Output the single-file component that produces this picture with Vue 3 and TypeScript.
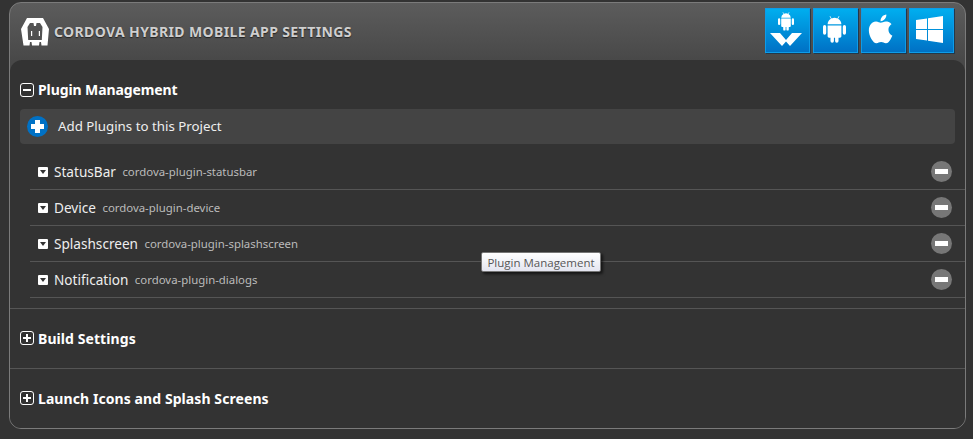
<script setup lang="ts">
interface Plugin { name: string; id: string }
const plugins: Plugin[] = [
  { name: 'StatusBar', id: 'cordova-plugin-statusbar' },
  { name: 'Device', id: 'cordova-plugin-device' },
  { name: 'Splashscreen', id: 'cordova-plugin-splashscreen' },
  { name: 'Notification', id: 'cordova-plugin-dialogs' },
]
const androidPath = 'M8.2 1.2l1.3 2.1A7 7 0 0 1 14.5 3.3l1.3-2.1.5.3-1.2 2.1A6 6 0 0 1 18 8.4H6a6 6 0 0 1 2.9-4.8L7.7 1.500zM6 9.400h12v9.400a1.300 1.300 0 0 1-1.300 1.300h-1.200v2.900a1.500 1.500 0 0 1-3 0v-2.900h-1v2.900a1.500 1.500 0 0 1-3 0v-2.900H7.300A1.300 1.300 0 0 1 6 18.800zM3.400 9.100A1.400 1.400 0 0 1 4.800 10.500v5.600a1.400 1.400 0 0 1-2.800 0v-5.600A1.400 1.400 0 0 1 3.400 9.100zM20.600 9.100a1.400 1.400 0 0 1 1.400 1.400v5.600a1.400 1.400 0 0 1-2.800 0v-5.600a1.400 1.400 0 0 1 1.400-1.400z'
</script>

<template>
  <div class="page">
    <div class="panel">
      <header class="head">
        <svg class="logo" viewBox="0 0 28 28" aria-hidden="true">
          <path fill="#fff" fill-rule="evenodd" d="M6 0h16l6 11-1.500 16.500h-6l-.5-3.500h-1.500l-.5 3.500h-7l-.5-3.500h-1.500l-.5 3.500h-6L0 11zM9 5l-2.500 4 .7 13h13.600l.7-13L19 5h-3.500l-.5 3h-2l-.5-3z" />
          <rect x="10" y="13" width="1.200" height="5" fill="#fff" />
          <rect x="17.800" y="13" width="1.200" height="5" fill="#fff" />
        </svg>
        <h1 class="title">Cordova Hybrid Mobile App Settings</h1>
        <div class="platforms">
          <button class="platform">
            <svg viewBox="0 0 43 43" aria-hidden="true">
              <g transform="translate(10.400 2) scale(.8)"><path fill="#fff" :d="androidPath" /></g>
              <path fill="#fff" d="M4 24H14L20 31L26 24H36L24 37L20 32.500L16 37Z" />
            </svg>
          </button>
          <button class="platform">
            <svg viewBox="0 0 43 43" aria-hidden="true">
              <g transform="translate(6.700 5.600) scale(1.150)"><path fill="#fff" :d="androidPath" /></g>
            </svg>
          </button>
          <button class="platform">
            <svg viewBox="0 0 43 43" aria-hidden="true">
              <g transform="translate(4.200 5.500) scale(1.200)"><path fill="#fff" d="M12.152 6.896c-.948 0-2.415-1.078-3.960-1.040-2.040.027-3.910 1.183-4.961 3.014-2.117 3.675-.546 9.103 1.519 12.090 1.013 1.454 2.208 3.090 3.792 3.039 1.520-.065 2.090-.987 3.935-.987 1.831 0 2.350.987 3.960.948 1.637-.026 2.676-1.480 3.676-2.948 1.156-1.688 1.636-3.325 1.662-3.415-.039-.013-3.182-1.221-3.220-4.857-.026-3.040 2.480-4.494 2.597-4.559-1.429-2.090-3.623-2.324-4.390-2.376-2-.156-3.675 1.090-4.610 1.090zM15.530 3.830c.843-1.012 1.400-2.427 1.245-3.830-1.207.052-2.662.805-3.532 1.818-.780.896-1.454 2.338-1.273 3.714 1.338.104 2.715-.688 3.559-1.701" /></g>
            </svg>
          </button>
          <button class="platform">
            <svg viewBox="0 0 43 43" aria-hidden="true">
              <path fill="#fff" d="M6 11L17 9.500V20H6ZM18 9.300L33 7V20H18ZM6 21H17V31.500L6 30ZM18 21H33V34L18 31.700Z" />
            </svg>
          </button>
        </div>
      </header>

      <div class="body">
        <section class="section open">
          <div class="section-title">
            <span class="toggle"><i class="bar"></i></span>
            Plugin Management
          </div>
          <div class="add-bar">
            <span class="add-icon"></span>
            Add Plugins to this Project
          </div>
          <ul class="plugins">
            <li v-for="p in plugins" :key="p.id" class="plugin">
              <span class="caret"></span>
              <span class="plugin-name">{{ p.name }}</span>
              <span class="plugin-id">{{ p.id }}</span>
              <span class="remove"></span>
            </li>
          </ul>
        </section>
        <section class="section closed">
          <div class="section-title">
            <span class="toggle"><i class="bar"></i><i class="bar vert"></i></span>
            Build Settings
          </div>
        </section>
        <section class="section closed last">
          <div class="section-title">
            <span class="toggle"><i class="bar"></i><i class="bar vert"></i></span>
            Launch Icons and Splash Screens
          </div>
        </section>
        <div class="tooltip">Plugin Management</div>
      </div>
    </div>
  </div>
</template>

<style>
html, body { background: #fff; }
</style>

<style scoped>
.page {
  height: 439px;
  box-sizing: border-box;
  padding: 2px 7px 0 9px;
  background: #333;
  font-family: "Noto Sans", "Open Sans", sans-serif;
  color: #fff;
}
.panel {
  height: 427px;
  box-sizing: border-box;
  border: 1px solid #7b7b7b;
  border-radius: 12px;
  background: linear-gradient(#5c5c5c, #484848 58px);
  display: flex;
  flex-direction: column;
  overflow: hidden;
}
.head {
  height: 57px;
  flex: none;
  display: flex;
  align-items: center;
  padding: 0 11px;
  box-sizing: border-box;
}
.logo { width: 28px; height: 28px; flex: none; margin-top: 1px; }
.title {
  margin: 0 0 0 5px;
  font-size: 14px;
  font-weight: 700;
  letter-spacing: .38px;
  text-transform: uppercase;
  color: #cfcfcf;
  text-shadow: 0 1px 1px #222;
  flex: 1;
}
.platforms { display: flex; gap: 3px; align-self: flex-start; margin-top: 5px; }
.platform {
  width: 45px;
  height: 45px;
  box-sizing: border-box;
  padding: 0;
  border: 1px solid #0d9ce9;
  box-shadow: 1px 1px 0 #23384a;
  background: linear-gradient(#00aeef, #0071c5);
  display: block;
}
.platform svg { display: block; width: 43px; height: 43px; }
.body {
  position: relative;
  flex: 1;
  background: #333;
  border-radius: 12px 12px 0 0;
  display: flex;
  flex-direction: column;
}
.section { padding-left: 10px; }
.open { height: 249px; border-bottom: 1px solid #555; box-sizing: border-box; }
.closed { height: 60px; border-bottom: 1px solid #555; box-sizing: border-box; }
.last { border-bottom: 0; flex: 1; }
.section-title {
  height: 60px;
  padding-bottom: 2px;
  box-sizing: border-box;
  display: flex;
  align-items: center;
  gap: 4px;
  font-size: 14px;
  font-weight: 700;
  letter-spacing: .08px;
}
.open .section-title { height: 49px; padding: 10px 0 0; letter-spacing: -.1px; }
.toggle {
  position: relative;
  width: 14px;
  height: 14px;
  box-sizing: border-box;
  border: 1px solid #fff;
  border-radius: 3px;
  flex: none;
}
.bar {
  position: absolute;
  left: 2px;
  top: 5px;
  width: 8px;
  height: 2px;
  background: #fff;
}
.vert { left: 5px; top: 2px; width: 2px; height: 8px; }
.add-bar {
  height: 35px;
  margin-right: 10px;
  padding-bottom: 1px;
  box-sizing: border-box;
  background: #444;
  border-radius: 4px;
  display: flex;
  align-items: center;
  padding-left: 7px;
  gap: 10px;
  font-size: 13.300px;
  color: #eee;
}
.add-icon {
  position: relative;
  width: 21px;
  height: 21px;
  border-radius: 50%;
  background: #0071c5;
  flex: none;
}
.add-icon::before,
.add-icon::after {
  content: "";
  position: absolute;
  background: #fff;
}
.add-icon::before { left: 4px; top: 8px; width: 13px; height: 5px; }
.add-icon::after { left: 8px; top: 4px; width: 5px; height: 13px; }
.plugins {
  list-style: none;
  margin: 10px 0 0 10px;
  padding: 0;
}
.plugin {
  height: 36px;
  box-sizing: border-box;
  border-bottom: 1px solid #555;
  display: flex;
  align-items: center;
  padding: 0 13px 0 8px;
}
.caret {
  position: relative;
  width: 10px;
  height: 10px;
  background: #fff;
  border-radius: 1px;
  flex: none;
  margin-right: 6px;
}
.caret::after {
  content: "";
  position: absolute;
  left: 1.500px;
  top: 3px;
  border-left: 3.500px solid transparent;
  border-right: 3.500px solid transparent;
  border-top: 4px solid #333;
}
.plugin-name { font-size: 13.600px; color: #eee; margin-top: -1px; }
.plugin-id { font-size: 11.400px; color: #bbb; margin-left: 6.500px; flex: 1; }
.remove {
  position: relative;
  width: 21px;
  height: 21px;
  border-radius: 50%;
  background: #777;
  flex: none;
  margin-top: -1px;
}
.remove::after {
  content: "";
  position: absolute;
  left: 4px;
  top: 8px;
  width: 13px;
  height: 5px;
  background: #fff;
}
.tooltip {
  position: absolute;
  left: 471px;
  top: 192px;
  width: 120px;
  height: 20px;
  box-sizing: border-box;
  border: 1px solid #767676;
  border-radius: 2px;
  background: linear-gradient(#fff, #e4e5f0);
  box-shadow: 2px 2px 3px rgba(0,0,0,.6);
  color: #575757;
  font-size: 11.500px;
  font-family: "Open Sans", sans-serif;
  display: flex;
  align-items: center;
  justify-content: center;
  white-space: nowrap;
}
</style>
